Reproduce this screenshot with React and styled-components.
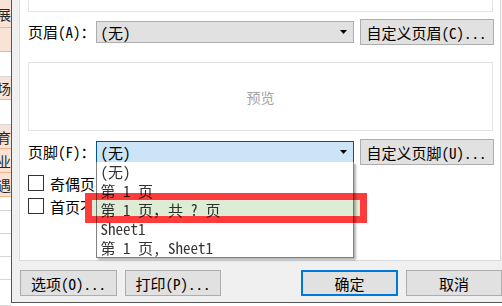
import React from 'react';
import styled, { createGlobalStyle } from 'styled-components';

// SimSun-like metrics: CJK full width, latin exactly half width
const UI_FONT = '"Noto Sans Mono CJK SC", "Noto Sans CJK SC", "Liberation Mono", monospace';
const SOFT_FONT = '"Noto Sans CJK SC", "Noto Sans", sans-serif';

const BTN_BG = '#e1e1e1';
const BTN_BORDER = '#adadad';
const BOX_BORDER = '#e3e3e3';

const GlobalStyle = createGlobalStyle`
  *, *::before, *::after { box-sizing: border-box; }
  html, body {
    margin: 0;
    width: 502px;
    height: 306px;
    overflow: hidden;
    background: #fff;
  }
  body {
    font-family: ${UI_FONT};
    font-size: 15px;
    color: #000;
  }
`;

const Page = styled.div`
  display: flex;
  width: 502px;
  height: 306px;
  overflow: hidden;
  background: #fff;
`;

/* spreadsheet peeking out behind the dialog */
const SheetColumn = styled.div`
  display: flex;
  flex-direction: column;
  flex: 0 0 11px;
  width: 11px;
  min-width: 0;
  height: 306px;
  overflow: hidden;
`;

const SheetCell = styled.div`
  display: flex;
  justify-content: flex-end;
  align-items: center;
  flex: 0 0 ${(p) => p.$h}px;
  width: 11px;
  overflow: hidden;
  white-space: nowrap;
  font-family: ${SOFT_FONT};
  font-size: 14px;
  color: #262626;
  background: ${(p) => (p.$peach ? '#f9e3d6' : '#fff')};
  border-bottom: 1px solid ${(p) => (p.$peach ? '#f2b589' : '#d6d6d6')};

  span {
    flex: 0 0 auto;
  }
`;

const Dialog = styled.div`
  display: flex;
  flex-direction: column;
  flex: 0 0 491px;
  height: 303px;
  padding-left: 7px;
  background: #f0f0f0;
  border-left: 1px solid #555;
  border-bottom: 1px solid #555;
`;

const Panel = styled.div`
  display: flex;
  flex-direction: column;
  width: 482px;
  height: 261px;
  padding: 0 7px 0 8px;
  background: #fff;
  border: 1px solid #d9d9d9;
  border-top: none;
`;

const TopBox = styled.div`
  height: 12px;
  border: 1px solid ${BOX_BORDER};
  border-top: none;
`;

const PreviewBox = styled.div`
  display: flex;
  align-items: center;
  justify-content: center;
  height: 69px;
  margin-top: 17px;
  border: 1px solid ${BOX_BORDER};
  font-family: ${SOFT_FONT};
  font-size: 14px;
  color: #a3a3a3;
`;

const FieldRow = styled.div`
  display: flex;
  align-items: center;
  height: 26px;
  margin-top: ${(p) => p.$gap}px;
`;

const Label = styled.span`
  flex: 0 0 67px;
  white-space: nowrap;
  line-height: 22px;
`;

const ComboWrap = styled.div`
  position: relative;
  flex: 0 0 258px;
`;

const Combo = styled.div`
  display: flex;
  align-items: center;
  justify-content: space-between;
  height: 22px;
  padding: 0 6px 0 4px;
  background: ${(p) => (p.$open ? '#cce4f7' : BTN_BG)};
  border: 1px solid ${(p) => (p.$open ? '#005499' : BTN_BORDER)};
  white-space: nowrap;
`;

const Button = styled.div`
  display: flex;
  align-items: center;
  justify-content: center;
  flex: 0 0 ${(p) => p.$w}px;
  height: 26px;
  margin-left: ${(p) => p.$ml || 0}px;
  background: ${BTN_BG};
  border: ${(p) => (p.$default ? '2px solid #0078d7' : `1px solid ${BTN_BORDER}`)};
  white-space: nowrap;
`;

const CheckRow = styled.div`
  display: flex;
  align-items: center;
  gap: 6px;
  height: 16px;
  margin-top: ${(p) => p.$gap}px;
  white-space: nowrap;
`;

const CheckBox = styled.span`
  flex: 0 0 16px;
  height: 16px;
  background: #fff;
  border: 1px solid #333;
`;

const DropList = styled.div`
  position: absolute;
  top: 21px;
  left: 0;
  z-index: 5;
  width: 258px;
  background: #fff;
  border: 1px solid #828282;
  border-top: none;
  box-shadow: 2px 2px 2px rgba(0, 0, 0, 0.3);
`;

const DropItem = styled.div`
  height: 19px;
  padding-left: 4px;
  line-height: 19px;
  color: #333;
  white-space: pre;
`;

/* red annotation frame, tinted inside like the hovered row */
const Marker = styled.div`
  position: absolute;
  left: -12px;
  top: 31px;
  width: 282px;
  height: 30px;
  border: 7px solid #ff3b3b;
  background: #deecd5;
  mix-blend-mode: multiply;
  pointer-events: none;
`;

const ButtonBar = styled.div`
  display: flex;
  height: 26px;
  margin-top: 9px;
  padding-left: 1px;
`;

const Arrow = () => (
  <svg width="7" height="4" viewBox="0 0 7 4">
    <path d="M0 0H7L3.5 4Z" fill="#000" />
  </svg>
);

const sheetCells = [
  { h: 28, peach: true, text: '展' },
  { h: 24, peach: true },
  { h: 25 },
  { h: 23, peach: true, text: '现场' },
  { h: 25 },
  { h: 24, peach: true, text: '教育' },
  { h: 24, peach: true, text: '企业' },
  { h: 24, peach: true, text: '待遇' },
  { h: 14 },
  { h: 23 },
  { h: 23 },
  { h: 23 },
  { h: 26 },
];

const footerOptions = ['(无)', '第 1 页', '第 1 页，共 ? 页', 'Sheet1', '第 1 页, Sheet1'];

export default function App() {
  return (
    <>
      <GlobalStyle />
      <Page>
        <SheetColumn>
          {sheetCells.map((c, i) => (
            <SheetCell key={i} $h={c.h} $peach={c.peach}>
              {c.text && <span>{c.text}</span>}
            </SheetCell>
          ))}
        </SheetColumn>

        <Dialog>
          <Panel>
            <TopBox />

            <FieldRow $gap={7}>
              <Label>页眉(A)：</Label>
              <ComboWrap>
                <Combo>
                  <span>(无)</span>
                  <Arrow />
                </Combo>
              </ComboWrap>
              <Button $w={134} $ml={6}>自定义页眉(C)...</Button>
            </FieldRow>

            <PreviewBox>预览</PreviewBox>

            <FieldRow $gap={8}>
              <Label>页脚(F)：</Label>
              <ComboWrap>
                <Combo $open>
                  <span>(无)</span>
                  <Arrow />
                </Combo>
                <DropList>
                  {footerOptions.map((o) => (
                    <DropItem key={o}>{o}</DropItem>
                  ))}
                  <Marker />
                </DropList>
              </ComboWrap>
              <Button $w={134} $ml={6}>自定义页脚(U)...</Button>
            </FieldRow>

            <CheckRow $gap={10}>
              <CheckBox />
              <span>奇偶页不同(D)</span>
            </CheckRow>
            <CheckRow $gap={7}>
              <CheckBox />
              <span>首页不同(I)</span>
            </CheckRow>
          </Panel>

          <ButtonBar>
            <Button $w={97}>选项(O)...</Button>
            <Button $w={96} $ml={8}>打印(P)...</Button>
            <Button $w={97} $ml={80} $default>确定</Button>
            <Button $w={96} $ml={8}>取消</Button>
          </ButtonBar>
        </Dialog>
      </Page>
    </>
  );
}
